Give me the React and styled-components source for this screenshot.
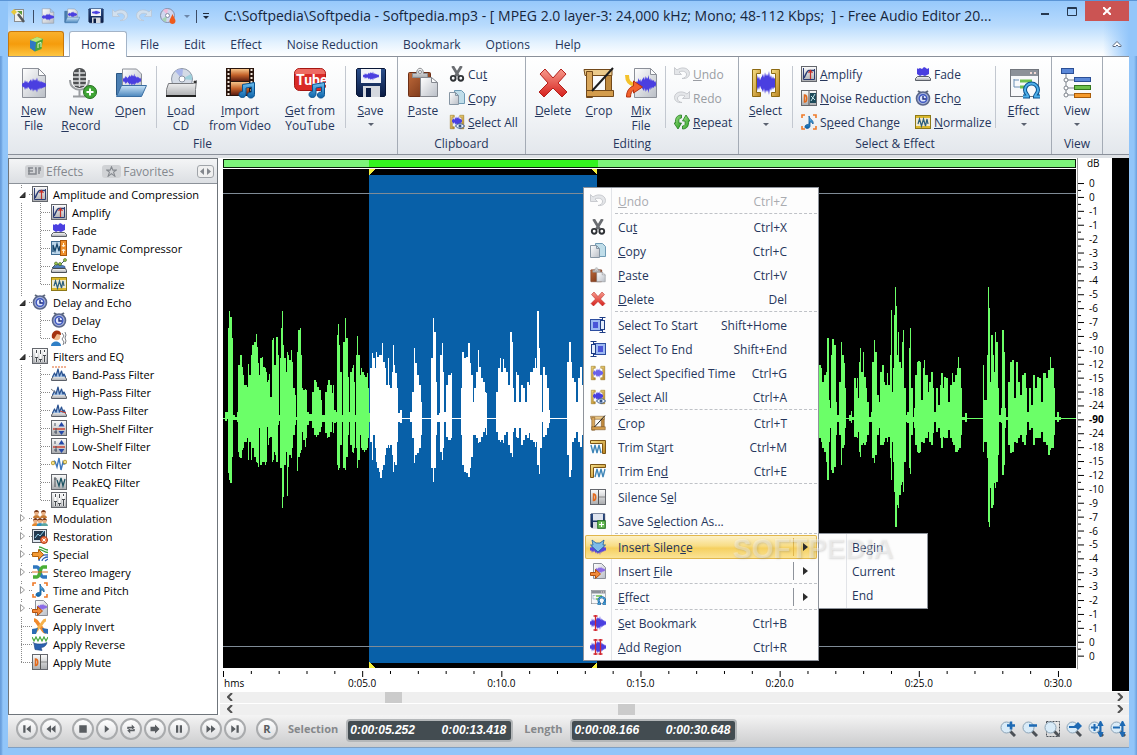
import React, { useState } from 'react';
import styled, { createGlobalStyle, css } from 'styled-components';

const GlobalStyle = createGlobalStyle`
  * {
    box-sizing: border-box;
  }

  body {
    margin: 0;
    font-family: 'Open Sans', 'Noto Sans', sans-serif;
    font-size: 12px;
    color: #26365c;
  }

  button {
    font: inherit;
    color: inherit;
    background: none;
    border: 0;
    padding: 0;
    margin: 0;
  }

  ul {
    list-style: none;
    margin: 0;
    padding: 0;
  }

  svg {
    display: block;
    flex: none;
  }
`;

/* ---------- icons ---------- */

const HEIGHTS = [1, 3, 2, 6, 3, 5, 2, 4, 5, 7, 4, 8, 5, 7, 5, 9, 4, 6, 3, 5, 3, 4, 2, 3, 1];

const Wave = ({ x, y, w, h, color = '#4a3fe0' }) => {
    const sx = w / 24;
    const sy = h / 18;
    const top = HEIGHTS.map((v, i) => `${x + i * sx},${y - v * sy}`);
    const bottom = HEIGHTS.map((v, i) => `${x + i * sx},${y + v * sy}`).reverse();
    return <polygon points={[...top, ...bottom].join(' ')} fill={color} />;
};

const Defs = () => (
    <svg width="0" height="0" aria-hidden="true">
        <defs>
            <linearGradient id="paper" x1="0" y1="0" x2="1" y2="1">
                <stop offset="0" stopColor="#fff" />
                <stop offset="1" stopColor="#b9bec6" />
            </linearGradient>
            <linearGradient id="steel" x1="0" y1="0" x2="0" y2="1">
                <stop offset="0" stopColor="#fdfdfd" />
                <stop offset="1" stopColor="#a9abae" />
            </linearGradient>
            <linearGradient id="folder" x1="0" y1="0" x2="0" y2="1">
                <stop offset="0" stopColor="#cde6f8" />
                <stop offset="1" stopColor="#4b86bd" />
            </linearGradient>
            <linearGradient id="red" x1="0" y1="0" x2="0" y2="1">
                <stop offset="0" stopColor="#f79a8c" />
                <stop offset="1" stopColor="#d6201c" />
            </linearGradient>
            <linearGradient id="gold" x1="0" y1="0" x2="1" y2="1">
                <stop offset="0" stopColor="#f7e08a" />
                <stop offset="1" stopColor="#b9821c" />
            </linearGradient>
            <linearGradient id="navy" x1="0" y1="0" x2="0" y2="1">
                <stop offset="0" stopColor="#2b4f8c" />
                <stop offset="1" stopColor="#0a1c44" />
            </linearGradient>
            <linearGradient id="wood" x1="0" y1="0" x2="1" y2="1">
                <stop offset="0" stopColor="#c06a3a" />
                <stop offset="1" stopColor="#6e2f14" />
            </linearGradient>
            <linearGradient id="film" x1="0" y1="0" x2="0" y2="1">
                <stop offset="0" stopColor="#f6c48a" />
                <stop offset="0.5" stopColor="#c4622a" />
                <stop offset="1" stopColor="#5c1c10" />
            </linearGradient>
            <linearGradient id="sky" x1="0" y1="0" x2="0" y2="1">
                <stop offset="0" stopColor="#6cc0f2" />
                <stop offset="1" stopColor="#0b61a8" />
            </linearGradient>
            <linearGradient id="leaf" x1="0" y1="0" x2="1" y2="1">
                <stop offset="0" stopColor="#a5e58c" />
                <stop offset="1" stopColor="#219a1c" />
            </linearGradient>
        </defs>
    </svg>
);

const Doc = () => <path d="M4.500 1.500h16l7 7v22h-23z M20.500 1.500v7h7" fill="url(#paper)" stroke="#8b8f98" />;

const Note = () => (
    <path
        d="M18.500 17.500l12-2v12c0 2-1.500 3.500-3.500 3.500s-3.500-1-3.500-3 1.500-3 4-3v-5l-5.500 1v6c0 2-1.500 3.500-3.500 3.500s-3.500-1-3.500-3 1.500-3 3.500-3z"
        fill="url(#sky)"
        stroke="#0a528f"
    />
);

const Plate = () => <rect x="0.500" y="0.500" width="15" height="15" fill="url(#steel)" stroke="#64676d" />;

const Brackets = () => (
    <g fill="url(#gold)" stroke="#8d6a12">
        <path d="M2.500 2.500h8v4h-4v19h4v4h-8z" />
        <path d="M29.500 2.500h-8v4h4v19h-4v4h8z" />
    </g>
);

const Lens = () => (
    <g>
        <path d="M10 10l5 5" stroke="#4c5157" strokeWidth="3" />
        <circle cx="6.500" cy="6.500" r="5.500" fill="#d9ebf8" stroke="#8ba3b6" />
    </g>
);

const Person = ({ x, y, shirt }) => (
    <g transform={`translate(${x} ${y})`}>
        <path d="M0 8c0-4 7-4 7 0z" fill={shirt} />
        <circle cx="3.500" cy="3" r="2.300" fill="#e9b083" />
        <path d="M1 3c0-4 5-4 5 0l-1-1H2z" fill="#7c3a17" />
    </g>
);

const FilterBase = () => (
    <path d="M3 9.500h10l2.500 3.500v1.500H.500V13z" fill="url(#steel)" stroke="#5a5f68" />
);

const FilterWave = () => (
    <path
        d="M1.500 11l2-4 1.500 3 2-7 1.500 7 2-5 1.500 5 1-2 1.500 3"
        fill="#9fbfe4"
        stroke="#2a5290"
        strokeWidth="1.200"
        strokeLinejoin="round"
    />
);

const art = {
    doc: [32, <><Doc /><Wave x={4} y={18} w={24} h={15} /></>],
    mic: [32, <>
        <path d="M5 13c0 13 19 13 19 0M14.500 23v6M8 29.500h13" fill="none" stroke="#9a9da1" strokeWidth="2" />
        <rect x="8" y="1" width="13" height="20" rx="6" fill="#4d4f52" />
        <path d="M9 6h11M8 10h13M8 14h13M9 18h11M14.500 2v18" stroke="#d8dadc" strokeWidth="1.500" />
        <circle cx="25" cy="25" r="6.500" fill="#3fa535" stroke="#256f1f" />
        <path d="M25 21.500v7M21.500 25h7" stroke="#fff" strokeWidth="2" />
    </>],
    open: [32, <>
        <path d="M1.500 28V6.500h6l2-2h5v23z" fill="#4b7fb3" stroke="#2a5684" />
        <path d="M7.500 25v-23h14l5 5v18z" fill="url(#paper)" stroke="#8b8f98" />
        <Wave x={8} y={13} w={18} h={13} />
        <path d="M6.500 18.500h25l-5 11h-25z" fill="url(#folder)" stroke="#3a6ea2" />
    </>],
    loadCd: [32, <>
        <circle cx="17" cy="12" r="10.500" fill="#d4dbe6" stroke="#8e97a6" />
        <path d="M17 12L10 4a11 11 0 0 1 8-2z" fill="#a9b6ea" />
        <path d="M17 12l9-5a11 11 0 0 1 1 6z" fill="#9ed0dc" />
        <circle cx="17" cy="12" r="3" fill="#fff" stroke="#8e97a6" />
        <path d="M3.500 16.500h25l3-3-1 9v7h-29v-7z" fill="url(#steel)" stroke="#77797d" />
        <path d="M1 28h30v2H1z" fill="#222" />
        <circle cx="30" cy="15" r="1.500" fill="#333" />
    </>],
    video: [32, <>
        <rect x="2" y="1" width="28" height="28" fill="#2a150d" />
        <rect x="7" y="2" width="18" height="12" fill="url(#film)" />
        <rect x="7" y="15" width="18" height="13" fill="url(#film)" />
        <path d="M4.500 2v27M27.500 2v27" stroke="#f2e6da" strokeWidth="2" strokeDasharray="2 2" />
        <Note />
    </>],
    tube: [32, <>
        <rect x="0.500" y="1.500" width="31" height="22" rx="5" fill="#d92a26" stroke="#a51612" />
        <path d="M1 7c0-5 3-5 5-5h20c3 0 5 1 5 5z" fill="#ee6b62" />
        <text x="2" y="18" fontFamily="Roboto, sans-serif" fontWeight="700" fontSize="14" fill="#fff">Tube</text>
        <Note />
    </>],
    save: [32, <>
        <path d="M2.500 1.500h27l1 1v26l-1 1H3.500l-2-2v-25z" fill="url(#navy)" stroke="#081636" />
        <rect x="6" y="2" width="20" height="14" fill="#f1f3f8" />
        <Wave x={8} y={9} w={16} h={9} />
        <rect x="8" y="19" width="17" height="11" fill="#d4d8df" />
        <rect x="11" y="21" width="5" height="9" fill="#0a1c44" />
    </>],
    saveSel: [32, <>
        <path d="M2.500 1.500h27v28H3.500l-2-2v-25z" fill="url(#navy)" stroke="#081636" />
        <rect x="6" y="2" width="20" height="13" fill="#dfe4ee" />
        <rect x="6" y="18" width="10" height="12" fill="#d4d8df" />
        <rect x="15.500" y="15.500" width="15" height="15" fill="#6fc25c" stroke="#1d6b18" strokeWidth="2" />
        <path d="M23 18v10M18 23h10" stroke="#fff" strokeWidth="2" />
    </>],
    paste: [32, <>
        <rect x="1.500" y="5.500" width="22" height="24" rx="1" fill="url(#wood)" stroke="#6d2f16" />
        <path d="M5.500 10.500v-4h4c0-7 7-7 7 0h4v4z" fill="url(#steel)" stroke="#8c8e92" />
        <circle cx="13" cy="5" r="1.500" fill="#fff" stroke="#8c8e92" />
        <path d="M13.500 10.500h11l6 5v14h-17z M24.500 10.500v5h6" fill="url(#paper)" stroke="#84888f" />
    </>],
    delete: [32, <path d="M3 7l5-5 8 9 8-9 5 5-8 9 9 9-5 5-9-9-9 9-5-5 9-9z" fill="url(#red)" stroke="#b3201b" />],
    crop: [32, <>
        <path d="M1 2.500h28v6H2z" fill="#ecca8a" stroke="#72491a" />
        <path d="M3.500 8.500v-4h6v26h-6z" fill="#d9a75c" stroke="#72491a" />
        <path d="M22.500 8.500h6v15h-6z" fill="#c08a3e" stroke="#72491a" />
        <path d="M3.500 23.500h27v6h-27z" fill="#d39c4c" stroke="#72491a" />
        <path d="M30 1L9 24" stroke="#1d1d1d" strokeWidth="2" />
    </>],
    mix: [32, <>
        <path d="M9.500 1.500h16l6 6v23h-22z M25.500 1.500v6h6" fill="url(#paper)" stroke="#8b8f98" />
        <Wave x={11} y={17} w={20} h={18} />
        <path d="M2 8c0 7 3 9 8 10" fill="none" stroke="#f4c22c" strokeWidth="4" />
        <path d="M1.500 30c0-6 3-10 7-11v-5l9 6-9 6v-3c-2 1-3 4-3 7z" fill="#f2622c" stroke="#b73110" />
    </>],
    select: [32, <><Wave x={4} y={16} w={24} h={24} /><Brackets /></>],
    selectAll: [32, <>
        <Brackets />
        <Wave x={6} y={14} w={20} h={20} />
        <path d="M13 24c4-6 14-6 18 0-4 6-14 6-18 0z" fill="#e7f0fb" stroke="#34558c" strokeWidth="2" />
        <circle cx="22" cy="24" r="3" fill="#34558c" />
    </>],
    selTime: [32, <><Brackets /><Wave x={6} y={16} w={20} h={20} color="#6a62ea" /></>],
    effect: [32, <>
        <rect x="2.500" y="2.500" width="28" height="27" fill="#f7f8fa" stroke="#72767d" />
        <rect x="3" y="3" width="27" height="6" fill="#8c9199" />
        <path d="M22 6h2M26 6h2" stroke="#f3d9d4" strokeWidth="2" />
        <path d="M6 12v8h6M6 13h5" fill="none" stroke="#6b8fb5" />
        <path d="M12 14h12M12 20h5" stroke="#6ec04f" strokeWidth="3" />
        <path d="M15 29.500h5c0-2-3-3-3-6.500a6.500 6.500 0 0 1 13 0c0 3.500-3 4.500-3 6.500h5" fill="none" stroke="#0a528f" strokeWidth="4" />
        <path d="M15 29.500h5c0-2-3-3-3-6.500a6.500 6.500 0 0 1 13 0c0 3.500-3 4.500-3 6.500h5" fill="none" stroke="#4fb0ea" strokeWidth="2" />
    </>],
    view: [32, <>
        <path d="M5 6v22M5 13h9M5 21h9M5 28h9" fill="none" stroke="#7d838c" />
        <rect x="0.500" y="1.500" width="12" height="5" fill="#5b88d8" stroke="#2b4f96" />
        <rect x="13.500" y="10.500" width="16" height="4" fill="#5b88d8" stroke="#2b4f96" />
        <rect x="13.500" y="18.500" width="16" height="4" fill="#6cc04a" stroke="#34761d" />
        <rect x="13.500" y="26.500" width="16" height="4" fill="#f59a2c" stroke="#a85c0a" />
        <g fill="#fff" stroke="#7d838c">
            <circle cx="5" cy="13" r="2" />
            <circle cx="5" cy="21" r="2" />
            <circle cx="5" cy="28" r="2" />
        </g>
    </>],
    wizard: [16, <>
        <rect x="3.500" y="1.500" width="9" height="12" fill="#f1f1ee" stroke="#8b8d8e" />
        <path d="M7 6l6 8" stroke="#55595c" strokeWidth="2.500" />
        <path d="M0 4l3-3 3 3-3 3z" fill="#e7c93d" />
        <path d="M6 3h5v4z" fill="#5f9a3c" />
    </>],
    cube: [32, <>
        <path d="M4 8l14-6 12 4-3 20-13 5-10-7z" fill="#4aa53a" />
        <path d="M4 8l12 4-2 19-10-7z" fill="#2f78c4" />
        <path d="M4 8l14-6 12 4-14 6z" fill="#bfe77a" />
        <path d="M20 15l6-2v9M20 15v9" fill="none" stroke="#e6f9c8" strokeWidth="2" />
    </>],
    cd: [16, <>
        <circle cx="7.500" cy="7.500" r="7" fill="#cfd6ee" stroke="#858da6" />
        <path d="M7 7L3 2a7 7 0 0 1 5-1z" fill="#f1b9d8" />
        <path d="M7 8l-5 3a7 7 0 0 0 4 3z" fill="#a5d4b4" />
        <circle cx="7.500" cy="7.500" r="2" fill="#fff" stroke="#858da6" />
        <path d="M12.500 6c1 3 3 5 3 7 0 4-6 4-6 0 0-2 2-4 3-7z" fill="#ee5a1c" />
    </>],
    undo: [16, <path d="M.500 1.500v7h7L5 6c4-2 8 0 7.500 3-.500 2-2 3-4.500 3.500 5 .500 7.500-2 7.500-5C15.500 2 8 0 3 4z" fill="#e4e6e9" stroke="#bfc2c7" strokeWidth="0.800" />],
    redo: [16, <path d="M15.500 1.500v7h-7L11 6C7 4 3 6 3.500 9c.500 2 2 3 4.500 3.500C3 13 .500 10.500.500 7.500.500 2 8 0 13 4z" fill="#e4e6e9" stroke="#bfc2c7" strokeWidth="0.800" />],
    repeat: [16, <g fill="url(#leaf)" stroke="#1f7a1a" strokeWidth="0.800">
        <path d="M7.500 1C3 1 1 4 1.500 9H0l4 6 3.500-6H5C4.500 6 5 4 7.500 4z" />
        <path d="M8.500 15c4.500 0 6.500-3 6-8H16l-4-6-3.500 6H11c.500 3 0 5-2.500 5z" />
    </g>],
    cut: [16, <>
        <path d="M3.500 0l6 10M12.500 0l-6 10" stroke="#6b6e72" strokeWidth="2.800" />
        <circle cx="4.200" cy="12.300" r="2.400" fill="none" stroke="#2f3236" strokeWidth="1.900" />
        <circle cx="11.800" cy="12.300" r="2.400" fill="none" stroke="#2f3236" strokeWidth="1.900" />
    </>],
    copy: [16, <>
        <path d="M5.500.500h7l3 3v10h-10z" fill="#bfdde9" stroke="#6f9bb5" />
        <path d="M.500 2.500h6l3 3v9h-9z M6.500 2.500v3h3" fill="url(#paper)" stroke="#8695a3" />
    </>],
    amplify: [16, <>
        <Plate />
        <path d="M2.500 2v11.500h11V3" fill="none" stroke="#2c3c74" />
        <path d="M3 12C5 8 6 4.500 8 4.500h5" fill="none" stroke="#2a3d74" strokeWidth="1.400" />
        <path d="M9.500 13V5M7.500 7l2-2.500 2 2.500" fill="none" stroke="#c6322a" strokeWidth="1.200" />
    </>],
    noise: [16, <>
        <Plate />
        <path d="M8 1v14" stroke="#555" />
        <path d="M3.500 5v7c3 0 3-7 0-7z" fill="none" stroke="#e2691c" strokeWidth="1.500" />
        <path d="M9 3h6v10H9z" fill="#1d4a5a" />
        <path d="M10 11l4-7M10 6l4 4" stroke="#bfe3ea" />
    </>],
    mute: [16, <>
        <Plate />
        <path d="M8.500 1v14" stroke="#555" />
        <path d="M9 8h6" stroke="#888" />
        <path d="M3.500 5v6.500c3 0 3-6.500 0-6.500z" fill="none" stroke="#e2691c" strokeWidth="1.500" />
    </>],
    speed: [16, <>
        <path d="M1 4V1h3M12 1h3v3M15 12v3h-3M4 15H1v-3" fill="none" stroke="#ef7a28" strokeWidth="1.600" />
        <path d="M8 2c1 4 5 4 4 8-1-2-2-2-3-2v4c0 3-5 3-5 1 0-3 3-2 4-3z" fill="url(#sky)" stroke="#0b5797" strokeWidth="0.800" />
    </>],
    fade: [16, <>
        <path d="M2 2l1 1 2-1 2 1 2-2 2 1 1 1 2-1v6l-2 1-2 1-3-1-2 1-3-2z" fill="#4a3fe0" />
        <path d="M2.500 10.500h11l2 2v2h-15v-2z" fill="url(#steel)" stroke="#5a5f68" />
    </>],
    echo: [16, <>
        <path d="M3 1l3 2M13 1l-3 2" stroke="#5b6678" strokeWidth="2" />
        <circle cx="8" cy="8.500" r="6.500" fill="#a5b2d8" stroke="#59658a" strokeWidth="1.600" />
        <circle cx="8" cy="8.500" r="3.800" fill="#dfe6fc" stroke="#3c55c0" strokeWidth="1.400" />
        <path d="M8 6v3h3" fill="none" stroke="#1c2c7c" strokeWidth="1.400" />
    </>],
    normalize: [16, <>
        <rect x="0.500" y="1.500" width="15" height="13" fill="#efe9cf" stroke="#8d7818" />
        <path d="M1 3h14M1 13h14" stroke="#dcb92c" strokeWidth="2" />
        <path d="M3 10l1.500-5 2 7 2-7 2 7 1.500-7 1 5" fill="none" stroke="#2c5f7c" strokeWidth="1.200" />
    </>],
    compressor: [16, <>
        <rect x="0.500" y="1.500" width="10" height="13" fill="#bcd6ea" stroke="#3f6c92" />
        <path d="M2 12V5l2 6 2-7 2 7 1-5" fill="none" stroke="#15456b" strokeWidth="1.300" />
        <rect x="9.500" y="0.500" width="6" height="15" fill="#ef8f2b" stroke="#a8550c" />
        <path d="M12.500 3v3M11 5l1.500 2L14 5M12.500 13v-3M11 11l1.500-2L14 11" fill="none" stroke="#fff3dc" />
    </>],
    envelope: [16, <>
        <path d="M1 10l4-4 4 1 5-5" fill="none" stroke="#3d5a66" />
        <path d="M2 9.500c3-3 8-3 12-1v1.500H2z" fill="#5584c0" stroke="#2f4f80" strokeWidth="0.600" />
        <path d="M1.500 10.500h13l1 2v2h-15v-2z" fill="url(#steel)" stroke="#4b4f57" />
        <g fill="#9cc84c" stroke="#3b5b18" strokeWidth="0.600">
            <circle cx="5" cy="5.500" r="1.500" />
            <circle cx="9" cy="6" r="1.500" />
            <circle cx="14" cy="2" r="1.500" />
        </g>
    </>],
    talker: [16, <>
        <path d="M0 16c0-6 10-6 10 0z" fill="#2f7fc6" />
        <circle cx="5.500" cy="6.500" r="3.800" fill="#f0b98c" />
        <path d="M1 8C-1-1 11-2 10 5L6 4l-3 5z" fill="#a5320f" />
        <path d="M11 3l2 3-2 3 2 3-1 3M14 2l1 3-1 3 1 3-1 3" fill="none" stroke="#7c8087" />
    </>],
    eq: [16, <>
        <Plate />
        <path d="M4.500 2v12M8.500 2v12M12.500 2v12" stroke="#fff" strokeWidth="2" />
        <path d="M3 9.500h3M7 11.500h3M11 7.500h3M4.500 9v5M8.500 11v3M12.500 7v7M4.500 2v3M8.500 2v4M12.500 2v2" stroke="#474b50" />
    </>],
    bandPass: [16, <>
        <path d="M1 1h14" stroke="#e0662a" strokeDasharray="2 1" />
        <FilterBase />
        <FilterWave />
    </>],
    highPass: [16, <>
        <FilterBase />
        <FilterWave />
        <path d="M0 5l5 4" stroke="#7a7d82" />
    </>],
    lowPass: [16, <>
        <FilterBase />
        <FilterWave />
        <path d="M9 9l6 2" stroke="#d0402c" />
    </>],
    shelf: [16, <>
        <Plate />
        <path d="M2 9h12" stroke="#cc3c2a" strokeWidth="1.400" />
        <path d="M4 3v3M3 12h3M5 8v6" stroke="#4b5565" />
        <path d="M7.500 6.500h6L10.500 2zM7.500 11h6l-3 4z" fill="#2549a8" />
    </>],
    notch: [16, <>
        <path d="M2 8c1-4 2-4 3 0l1 3 2-9 2 12 2-8 1 2 2-1" fill="none" stroke="#3d77bd" strokeWidth="1.400" />
        <circle cx="2" cy="7" r="1.800" fill="#f6e28a" stroke="#a98c1e" strokeWidth="0.800" />
        <circle cx="14" cy="6" r="1.800" fill="#f6e28a" stroke="#a98c1e" strokeWidth="0.800" />
    </>],
    peak: [16, <>
        <Plate />
        <path d="M4 3v10M3 5h3" stroke="#4b5157" />
        <path d="M6 6l2 6 2-8 2 8 2-7" fill="none" stroke="#1e5464" strokeWidth="1.300" />
    </>],
    people: [16, <>
        <Person x={1} y={0} shirt="#c67a34" />
        <Person x={8} y={0} shirt="#c67a34" />
        <Person x={0} y={8} shirt="#e4862c" />
        <Person x={4.5} y={8} shirt="#2f8ec0" />
        <Person x={9} y={8} shirt="#5ba6a0" />
    </>],
    restore: [16, <>
        <rect x="0.500" y="1.500" width="14" height="13" fill="#dfe6ee" stroke="#545a63" />
        <rect x="2" y="3" width="11" height="9" fill="#23394f" />
        <path d="M3 10l3-4 2 2 4-5" fill="none" stroke="#8fd0ee" />
        <circle cx="12" cy="12" r="3.500" fill="#f17a4a" stroke="#b33a16" />
        <path d="M10.500 10.500l3 3M13.500 10.500l-3 3" stroke="#fff" />
    </>],
    special: [16, <>
        <g fill="none" strokeWidth="1.300">
            <path d="M7 1c4 0 5 3 9 3M7 3.500c4 0 5 3 9 3" stroke="#3aa23a" />
            <path d="M7 15c0-4 4-7 9-6M10 15c0-2 3-4 6-4M13 15l3-2" stroke="#2b5fb4" />
        </g>
        <path d="M.500 6.500h6v-3l5 5-5 5v-3h-6z" fill="#f39a34" stroke="#b3610c" />
    </>],
    stereo: [16, <>
        <path d="M1 3h4c3 0 3 10 6 10h4" fill="none" stroke="#2f77c0" strokeWidth="3.500" />
        <path d="M15 3h-4c-3 0-3 10-6 10H1" fill="none" stroke="#4aae36" strokeWidth="3.500" />
        <path d="M0 8h16" stroke="#d86c24" />
    </>],
    generate: [16, <>
        <path d="M3.500.500h8l4 4v11h-12z" fill="url(#paper)" stroke="#8b8f98" />
        <Wave x={5} y={7} w={10} h={7} color="#8a6ae6" />
        <path d="M.500 9.500h5v-3l5 4.500-5 4.500v-3h-5z" fill="#f28a3a" stroke="#b3510c" />
    </>],
    invert: [16, <>
        <path d="M2 2c3 0 3 3 6 6s3 6 6 6" fill="none" stroke="#f08a2c" strokeWidth="3.500" />
        <path d="M14 2c-3 0-3 3-6 6s-3 6-6 6" fill="none" stroke="#f6b24c" strokeWidth="3" />
        <path d="M0 11l6-1-2 6H0zM10 10l6 1v5l-4-1z" fill="#2b6cb4" />
    </>],
    reverse: [16, <>
        <path d="M0 1l2 4 2-4 2 4 2-4 2 4 2-4 2 4 2-4" fill="none" stroke="#46a83a" strokeWidth="1.200" />
        <path d="M1 6.500c3 2 10 2 14 0-1 4-4 5-6 5l1 3-7-1-1-6z" fill="#2b62b0" stroke="#17407c" strokeWidth="0.600" />
    </>],
    selStart: [16, <>
        <rect x="0.500" y="2.500" width="11" height="11" fill="#9db8f2" stroke="#2c4da0" />
        <rect x="3" y="5" width="5" height="6" fill="#4a55d8" />
        <path d="M9.500.500h6M9.500 15.500h6M12.500 1v14" stroke="#1d3c84" />
        <rect x="10.500" y="3.500" width="4" height="9" fill="#e4edfb" stroke="#1d3c84" />
    </>],
    selEnd: [16, <>
        <rect x="4.500" y="2.500" width="11" height="11" fill="#9db8f2" stroke="#2c4da0" />
        <rect x="8" y="5" width="5" height="6" fill="#4a55d8" />
        <path d="M.500.500h6M.500 15.500h6M3.500 1v14" stroke="#1d3c84" />
        <rect x="1.500" y="3.500" width="4" height="9" fill="#e4edfb" stroke="#1d3c84" />
    </>],
    trimStart: [16, <>
        <path d="M.500 1.500h15v13h-3v-10h-12z" fill="url(#gold)" stroke="#7d5616" />
        <path d="M1 6l2 8 2-8 2 8 2-8 2 8" fill="none" stroke="#3f86b8" strokeWidth="1.400" />
    </>],
    trimEnd: [16, <>
        <path d="M.500 1.500h15v3h-12v10h-3z" fill="url(#gold)" stroke="#7d5616" />
        <path d="M5 14l2-8 2 8 2-8 2 8 2-8" fill="none" stroke="#3f86b8" strokeWidth="1.400" />
    </>],
    insSilence: [16, <>
        <Wave x={0} y={10} w={16} h={12} color="#5a46dc" />
        <path d="M2 1l4 3h4l4-3-1 5h2.500L8 13 .500 6H3z" fill="#7dbbe8" stroke="#1f5f9c" strokeWidth="0.800" />
    </>],
    bookmark: [16, <>
        <Wave x={0} y={8} w={16} h={14} />
        <path d="M5.500 0v16M3.500 1h4M3.500 15h4" stroke="#d1262e" strokeWidth="1.300" />
    </>],
    region: [16, <>
        <Wave x={0} y={8} w={16} h={14} />
        <path d="M5.500 0v16M10.500 0v16M3.500 1h4M8.500 1h4M3.500 15h4M8.500 15h4" stroke="#d1262e" strokeWidth="1.300" />
    </>],
    zoomIn: [16, <><Lens /><path d="M11 .500v8M7 4.500h8" stroke="#1e6ab4" strokeWidth="2.500" /></>],
    zoomOut: [16, <><Lens /><path d="M7 4.500h8" stroke="#1e6ab4" strokeWidth="2.500" /></>],
    zoomSel: [16, <><rect x="2.500" y="0.500" width="13" height="15" fill="none" stroke="#4a5058" strokeDasharray="2 1" /><Lens /></>],
    zoomFull: [16, <><Lens /><path d="M3 6h8" stroke="#1e6ab4" strokeWidth="2" /><path d="M12 1l4 4-4 4-4-4z" fill="#1e6ab4" /></>],
    zoomVIn: [16, <><Lens /><path d="M6.500 3v7M3 6.500h7" stroke="#1e6ab4" strokeWidth="2" /><path d="M12.500 3v10M11 4l1.500-3L14 4zM11 12l1.500 3 1.500-3z" fill="#4ba3e6" stroke="#1e6ab4" strokeWidth="2" /></>],
    zoomVOut: [16, <><Lens /><path d="M3 6.500h7" stroke="#1e6ab4" strokeWidth="2" /><path d="M12.500 3v10M11 4l1.500-3L14 4zM11 12l1.500 3 1.500-3z" fill="#4ba3e6" stroke="#1e6ab4" strokeWidth="2" /></>],
    first: [16, <path d="M3 3h3v10H3zM13 3v10L7 8z" />],
    rewind: [16, <path d="M8 3v10L2 8zM14 3v10L8 8z" />],
    stop: [16, <path d="M3 3h10v10H3z" />],
    play: [16, <path d="M5 3l6 5-6 5z" />],
    loop: [16, <path d="M3 8V5h6V2l4 4-4 3V7H5v1zM13 8v3H7v3l-4-4 4-3v2h4V8z" />],
    next: [16, <path d="M2 5h6V2l6 6-6 6v-3H2z" />],
    pause: [16, <path d="M4 3h3v10H4zM9 3h3v10H9z" />],
    forward: [16, <path d="M2 3l6 5-6 5zM8 3l6 5-6 5z" />],
    last: [16, <path d="M3 3l6 5-6 5zM10 3h3v10h-3z" />],
};

const Icon = ({ name, size = 16 }) => {
    const [box, shapes] = art[name];
    return (
        <svg width={size} height={size} viewBox={`0 0 ${box} ${box}`} fill="currentColor" aria-hidden="true">
            {shapes}
        </svg>
    );
};

/* "&File" draws an underlined F */
const Hotkey = ({ text }) => {
    const at = text.indexOf('&');
    if (at < 0) return <span>{text}</span>;
    return (
        <span>
            {text.slice(0, at)}
            <u>{text[at + 1]}</u>
            {text.slice(at + 2)}
        </span>
    );
};

/* ---------- window frame ---------- */

const Window = styled.div`
  position: relative;
  display: flex;
  flex-direction: column;
  min-height: 100vh;
  padding: 0 8px 8px;
  background:
    linear-gradient(to right, #6a9fdc 1px, transparent 3px, transparent calc(100% - 3px), #6a9fdc 100%),
    #91c5f9;
`;

const Header = styled.header`
  margin: 0 -8px;
  padding: 0 8px;
  border-top: 1px solid #5b95d6;
  background:
    linear-gradient(to right, #91c5f9 8px, transparent 8px),
    linear-gradient(to left, #93c6fa 8px, rgba(147, 198, 250, 0) 34px),
    linear-gradient(to bottom, #97c9fb 0, #b7dafd 24px, #e4f2fe 42px, #ffffff 55px);
`;

const TitleBar = styled.div`
  display: flex;
  align-items: center;
  height: 30px;
`;

const QuickAccess = styled.div`
  display: flex;
  align-items: center;
  gap: 8px;
  padding: 0 15px 0 3px;
  color: #34445f;

  button:disabled {
    opacity: 0.7;
  }
`;

const QuickDivider = styled.span`
  width: 1px;
  height: 13px;
  margin: 0 -2px;
  background-color: #3c4c66;
`;

const Caret = styled.span`
  display: block;
  border: 3px solid transparent;
  border-top-color: ${props => props.color || '#5b6270'};
  border-bottom-width: 0;
`;

const Customize = styled.button`
  && {
    padding-top: 2px;
    border-top: 1px solid #1f2a3c;
  }
`;

const Title = styled.h1`
  flex: 1;
  min-width: 0;
  margin: 0;
  overflow: hidden;
  white-space: pre;
  font-size: 14px;
  font-weight: 400;
  line-height: 30px;
  color: #16263c;
`;

const WindowButtons = styled.div`
  display: flex;
  align-self: flex-start;

  button {
    display: flex;
    align-items: center;
    justify-content: center;
    width: 27px;
    height: 20px;
    color: #26384f;
  }

  button:first-child {
    padding-top: 5px;
  }

  button:last-child {
    width: 44px;
    color: #fff;
    background-color: #cb5453;
  }
`;

const Tabs = styled.nav`
  display: flex;
  gap: 1px;
  height: 25px;
`;

const AppButton = styled.button`
  && {
    display: flex;
    align-items: center;
    justify-content: center;
    width: 56px;
    margin-right: 4px;
    border: 1px solid #c7780d;
    border-bottom: 0;
    border-radius: 3px 3px 0 0;
    background: linear-gradient(to bottom, #f9b12d, #f59c0c 50%, #fdc642);
  }
`;

const Tab = styled.button`
  && {
    padding: 0 11px;
    border: 1px solid transparent;
    border-bottom: 0;
    border-radius: 3px 3px 0 0;
    line-height: 26px;
    ${props => props.$active && css`
      position: relative;
      height: 26px;
      background-color: #fff;
      border-color: #a3b4c8;
    `}
  }
`;

const Collapse = styled.button`
  && {
    margin-left: auto;
    padding-right: 7px;
  }
`;

/* ---------- ribbon ---------- */

const Ribbon = styled.div`
  display: flex;
  border: solid #8a909a;
  border-width: 1px 0;
  background: linear-gradient(to bottom, #ffffff 0, #f5f7f9 50%, #e3e7ec 100%);
`;

const Group = styled.section`
  display: flex;
  flex-direction: column;
  padding-top: 5px;
  border-right: 1px solid #a4abb5;
`;

const GroupBody = styled.div`
  display: flex;
  height: 72px;
  padding: 0 ${props => props.$pad || 0}px;
`;

const GroupTitle = styled.h2`
  margin: 0;
  font-size: 12px;
  font-weight: 400;
  line-height: 20px;
  text-align: center;
`;

const BigButton = styled.button`
  && {
    display: flex;
    flex-direction: column;
    align-items: center;
    width: ${props => props.$w}px;
    padding-top: 5px;
    line-height: 15px;
    white-space: nowrap;
  }

  svg {
    margin-bottom: 4px;
  }

  ${Caret} {
    margin-top: 5px;
  }
`;

const Divider = styled.span`
  width: 1px;
  margin: 4px 0 6px ${props => props.$gap || 0}px;
  background-color: #c3c8d0;
`;

const SmallColumn = styled.div`
  display: flex;
  flex-direction: column;
  width: ${props => props.$w}px;
  padding-left: ${props => props.$pad || 0}px;
`;

const SmallButton = styled.button`
  && {
    display: flex;
    align-items: center;
    gap: 3px;
    height: 24px;
    white-space: nowrap;
  }

  &&:disabled {
    color: #9a9da3;
  }
`;

/* ---------- body ---------- */

const Body = styled.main`
  display: flex;
  flex: 1;
  padding-top: 3px;
  background-color: #dfe2e6;
`;

const Sidebar = styled.aside`
  display: flex;
  flex-direction: column;
  width: 210px;
  border: 1px solid #6f757b;
  background-color: #fff;
`;

const SideTabs = styled.div`
  display: flex;
  align-items: center;
  height: 25px;
  padding: 0 3px 0 16px;
  color: #84888e;
  border-bottom: 1px solid #8c9299;
  background: linear-gradient(to bottom, #f4f5f6, #dcdfe3);

  button {
    display: flex;
    align-items: center;
    gap: 2px;
    margin-right: 19px;
  }

  button:last-child {
    justify-content: center;
    gap: 4px;
    width: 17px;
    height: 13px;
    margin: 0 0 0 auto;
    border: 1px solid #a0a4a9;
    border-radius: 3px;
    background-color: #f0f0f0;
  }
`;

const SideBadge = styled.span`
  display: flex;
  align-items: center;
  justify-content: center;
  width: 19px;
  height: 13px;
  border-radius: 3px;
  background-color: #d0d2d5;
`;

const Tree = styled.ul`
  padding-top: 1px;
  font-size: 11px;
  color: #000;
`;

const Node = styled.li`
  display: flex;
  align-items: center;
  height: 18px;
`;

const DOTS_Y = 'repeating-linear-gradient(to bottom, #8a8a8a 0 1px, transparent 1px 2px)';
const DOTS_X = 'repeating-linear-gradient(to right, #8a8a8a 0 1px, transparent 1px 2px)';

const Trunk = styled.span`
  display: flex;
  align-items: center;
  width: 23px;
  height: 18px;
  padding-left: 9px;
  background-repeat: no-repeat;
  background-image: ${DOTS_Y}, ${DOTS_X};
  background-position: 12px 0, right 9px;
  background-size:
    1px ${props => (props.$kind === 'toggle' ? '3px' : props.$kind === 'end' ? '9px' : '18px')},
    ${props => (props.$kind === 'toggle' ? '3px' : props.$kind === 'line' ? '0' : '11px')} 1px;
`;

const Branch = styled.span`
  width: 19px;
  height: 18px;
  background-repeat: no-repeat;
  background-image: ${DOTS_Y}, ${DOTS_X};
  background-position: 8px 0, 9px 9px;
  background-size: 1px ${props => (props.$last ? '9px' : '18px')}, 10px 1px;
`;

const NodeLabel = styled.button`
  && {
    display: flex;
    align-items: center;
    gap: 5px;
    white-space: nowrap;
  }
`;

const Editor = styled.section`
  display: flex;
  flex: 1;
  flex-direction: column;
  min-width: 0;
  background-color: #fff;
`;

const EditorTop = styled.div`
  display: grid;
  flex: 1;
  grid-template-columns: minmax(0, 1fr) 36px 17px;
  padding-left: 5px;
`;

const Track = styled.div`
  display: flex;
  flex-direction: column;
  padding-top: 1px;
`;

const Overview = styled.div`
  height: 9px;
  margin-bottom: 1px;
  border: 1px solid #0a1f0a;
  background: linear-gradient(to right, #7df57a 17%, #33f51e 17%, #33f51e 44%, #7df57a 44%);
`;

const Canvas = styled.div`
  display: flex;
  flex: 1;
  background-color: #000;
`;

const BlackStrip = styled.div`
  background-color: #000;
`;

const ScrollRow = styled.div`
  display: flex;
  align-items: center;
  height: 11px;
  margin: 1px 0 0 2px;
  padding: 0 6px 0 7px;
  color: #505050;
  background-color: #efefef;
`;

const ScrollTrack = styled.div`
  flex: 1;
  height: 11px;
  padding-left: ${props => props.$at};
`;

const Thumb = styled.div`
  width: 17px;
  height: 11px;
  background-color: #cbcbcb;
`;

/* ---------- footer ---------- */

const Footer = styled.footer`
  display: flex;
  align-items: center;
  height: 33px;
  padding: 0 3px 4px 8px;
  border-bottom: 1px solid #7f9fc2;
  background: linear-gradient(to bottom, #f4f4f4, #dfdfe0 50%, #cbcccd);
`;

const ButtonSet = styled.div`
  display: flex;
  gap: 2px;
  margin-right: 10px;
`;

const RoundButton = styled.button`
  && {
    display: flex;
    align-items: center;
    justify-content: center;
    width: 22px;
    height: 22px;
    border: 2px solid #a9abad;
    border-radius: 50%;
    font-size: 11px;
    font-weight: 700;
    color: #595d61;
    background: linear-gradient(to bottom, #ffffff, #dcdddf);
  }
`;

const FooterLabel = styled.span`
  font-size: 11px;
  font-weight: 700;
  color: #85888b;
`;

const Readout = styled.output`
  display: flex;
  align-items: center;
  justify-content: space-between;
  width: 167px;
  height: 23px;
  margin: 3px 11px 0 8px;
  padding: 0 5px 0 2px;
  border: 2px solid #b4b7b9;
  border-radius: 4px;
  font: italic 700 12px 'Liberation Sans', sans-serif;
  color: #fff;
  background-color: #434c51;
`;

const ZoomSet = styled.div`
  display: flex;
  gap: 6px;
  margin-left: auto;
`;

/* ---------- menus ---------- */

const Menu = styled.ul`
  position: absolute;
  top: ${props => props.$top}px;
  left: ${props => props.$left}px;
  width: ${props => props.$w}px;
  padding: 1px;
  border: 1px solid #8e939b;
  background:
    linear-gradient(to right, transparent 27px, #e2e4e8 27px, #e2e4e8 28px, transparent 28px),
    #fdfdfd;
`;

const MenuItem = styled.button`
  && {
    display: grid;
    grid-template-columns: 28px 1fr auto 30px;
    align-items: center;
    width: 100%;
    height: 24px;
    padding-left: 5px;
    border-radius: 2px;
    text-align: left;
    white-space: nowrap;
    ${props => props.$hot && css`
      background: linear-gradient(to bottom, #fdf3ce, #f8dd86 45%, #f5d060 55%, #fbe59b);
      box-shadow: inset 0 0 0 1px #e0b64c;
    `}
  }

  &&:disabled {
    color: #a9abb0;
  }
`;

const MenuArrow = styled.span`
  display: flex;
  align-items: center;
  height: 18px;
  margin-left: 6px;
  padding-left: 9px;
  border-left: 1px solid ${props => (props.$hot ? '#e0b64c' : '#8e939b')};

  &::after {
    content: '';
    border: 4px solid transparent;
    border-left: 5px solid #2c2c2c;
    border-right: 0;
  }
`;

const MenuLine = styled.li`
  height: 2px;
  margin-left: 30px;
  border-top: 1px dashed #bfc2c7;
`;

const SubItem = styled.button`
  && {
    display: block;
    width: 100%;
    height: 24px;
    padding-left: 32px;
    text-align: left;
  }
`;

const Watermark = styled.div`
  position: absolute;
  top: 533px;
  left: 733px;
  font: 700 28px/32px 'Liberation Sans', sans-serif;
  color: rgba(255, 255, 255, 0.35);
  text-shadow: 1px 1px 2px rgba(120, 120, 120, 0.25);
  pointer-events: none;
`;

/* ---------- data ---------- */

const tabs = ['Home', 'File', 'Edit', 'Effect', 'Noise Reduction', 'Bookmark', 'Options', 'Help'];

const treeData = [
    ['Amplitude and Compression', 'amplify', [
        ['Amplify', 'amplify'],
        ['Fade', 'fade'],
        ['Dynamic Compressor', 'compressor'],
        ['Envelope', 'envelope'],
        ['Normalize', 'normalize'],
    ]],
    ['Delay and Echo', 'echo', [
        ['Delay', 'echo'],
        ['Echo', 'talker'],
    ]],
    ['Filters and EQ', 'eq', [
        ['Band-Pass Filter', 'bandPass'],
        ['High-Pass Filter', 'highPass'],
        ['Low-Pass Filter', 'lowPass'],
        ['High-Shelf Filter', 'shelf'],
        ['Low-Shelf Filter', 'shelf'],
        ['Notch Filter', 'notch'],
        ['PeakEQ Filter', 'peak'],
        ['Equalizer', 'eq'],
    ]],
    ['Modulation', 'people', []],
    ['Restoration', 'restore', []],
    ['Special', 'special', []],
    ['Stereo Imagery', 'stereo', []],
    ['Time and Pitch', 'speed', []],
    ['Generate', 'generate', []],
    ['Apply Invert', 'invert'],
    ['Apply Reverse', 'reverse'],
    ['Apply Mute', 'mute'],
];

const menuData = [
    [['undo', '&Undo', 'Ctrl+Z']],
    [['cut', 'Cu&t', 'Ctrl+X'], ['copy', '&Copy', 'Ctrl+C'], ['paste', '&Paste', 'Ctrl+V'], ['delete', '&Delete', 'Del']],
    [
        ['selStart', 'Select To Start', 'Shift+Home'],
        ['selEnd', 'Select To End', 'Shift+End'],
        ['selTime', 'Select Specified Time', 'Ctrl+G'],
        ['selectAll', '&Select All', 'Ctrl+A'],
    ],
    [['crop', '&Crop', 'Ctrl+T'], ['trimStart', 'Trim St&art', 'Ctrl+M'], ['trimEnd', 'Trim En&d', 'Ctrl+E']],
    [['mute', 'Silence S&el', ''], ['saveSel', 'Save S&election As...', '']],
    [['insSilence', 'Insert Silen&ce', '>'], ['generate', 'Insert &File', '>']],
    [['effect', '&Effect', '>']],
    [['bookmark', '&Set Bookmark', 'Ctrl+B'], ['region', '&Add Region', 'Ctrl+R']],
];

const levels = [0, 0, -1, -1, -2, -3, -3, -4, -5, -6, -7, -9, -10, -12, -15, -18, -24];
const dbMarks = [...levels, -90, ...[...levels].reverse()];

/* x, top, bottom of each column; three units to a pixel, zero line at 790 */
const takes = [
    [-9, `15,772,798 20,772,792 24,518,955 28,470,975 31,485,983 35,550,905 38,625,870 40,780,795 46,787,795 50,770,800
    54,630,890 58,630,905 61,600,910 65,635,885 70,660,880 73,690,860 82,695,850 85,628,915 88,660,860 94,600,915
    97,570,880 103,560,905 107,537,920 110,575,925 113,625,935 117,660,820 119,610,930 125,605,920 130,635,920
    135,640,930 138,650,920 142,680,815 145,675,870 148,657,850 151,725,845 155,705,810 157,555,920 160,548,915
    163,630,890 166,630,900 169,545,920 173,600,810 176,780,798 180,610,940 184,520,940 187,470,1058 190,570,1025
    193,610,930 197,640,930 199,650,890 201,590,1022 205,600,935 208,615,900 212,620,905 214,585,910 217,620,880
    220,700,840 224,720,810 227,785,795 232,590,947 235,525,905 239,520,895 243,600,885 247,700,830 250,705,855
    254,702,875 258,705,850 261,770,810 266,778,797 275,780,800 277,710,820 282,675,840 287,680,845 292,695,840
    297,705,830 302,735,815 307,780,800 315,710,835 320,690,850 325,675,845 330,690,830 335,715,800 339,690,835
    343,765,805 348,770,800 351,540,930 354,508,945 358,570,940 361,650,870 365,780,800 369,560,940 375,490,945
    379,550,905 383,665,840 387,770,800 391,650,870 395,640,890 398,630,895 402,680,880 406,780,800 409,600,880
    412,543,940 415,600,915 419,660,840 423,640,880 427,650,885 431,660,890 435,665,885 439,655,880 443,700,850
    446,775,800 450,640,860 454,595,915 458,610,840 463,640,880 466,590,920 470,605,940 475,600,950 480,600,968
    485,565,945 488,620,930 493,640,900 498,690,880 502,610,870 505,690,880 510,700,870 514,650,900 517,570,950
    521,630,920 525,655,930 529,700,860 532,775,800 540,765,805 544,788,792 570,770,800 575,710,850 580,580,925
    584,625,900 590,660,895 597,690,880 601,740,840 605,788,792 631,610,940 637,490,980 642,530,940 646,680,840
    650,780,800 656,775,800 660,600,890 664,565,915 668,650,880 672,770,800 678,690,845 684,660,855 692,655,850
    696,788,792 722,700,840 726,590,930 731,610,950 737,605,955 743,565,965 748,625,940 752,660,905 757,740,840
    762,700,840 767,650,850 772,585,865 777,635,860 783,670,845 789,680,830 793,710,820 797,715,840 800,788,792
    827,710,830 834,640,855 838,610,860 842,650,855 847,612,865 852,640,840 858,650,830 864,690,870 868,530,895
    874,560,905 878,700,830 882,740,820 886,650,845 891,660,850 896,740,820 902,690,870 908,700,855 913,740,840
    919,680,850 925,690,835 930,650,855 937,640,860 943,610,875 948,640,860 951,468,930 955,580,958 960,660,880
    964,770,800 969,635,845 975,660,840 980,700,820 985,765,805 990,788,792 1041,620,900 1047,560,965 1051,620,945
    1056,670,860 1062,680,850 1067,740,830 1072,670,860 1078,635,875 1084,690,840 1090,685,840 1096,790,790`],
    [1761, `22,630,850 30,640,860 35,680,880 40,660,890 45,650,920 49,548,975 54,735,860 58,760,820 61,600,945 65,552,955
    71,570,935 75,740,840 80,780,800 85,680,840 90,560,930 95,600,880 100,625,870 104,700,820 107,788,792
    114,780,797 120,768,805 125,785,795 130,668,845 135,700,845 138,670,850 142,730,830 145,620,890 148,580,905
    152,650,870 156,590,865 159,665,870 166,700,860 169,740,840 175,785,800 181,770,800 185,620,910 189,556,925
    194,590,900 199,720,840 204,740,820 209,650,870 214,630,870 219,680,860 224,690,850 228,655,860 232,690,845
    237,600,910 240,465,975 243,710,860 247,640,920 250,480,1010 253,396,1115 256,455,1115 258,600,1050 262,530,1060
    266,620,1020 270,640,990 274,560,980 277,525,1010 281,700,920 285,780,800 290,770,805 294,580,940 297,520,958
    301,700,840 306,785,800 310,760,820 314,660,870 318,620,890 323,618,895 328,620,890 331,735,860 336,640,865
    340,615,865 344,660,850 351,710,830 356,680,860 361,650,870 366,700,835 370,770,800 376,700,830 381,750,820
    386,690,850 390,655,878 395,700,845 400,665,850 405,670,850 411,740,825 417,690,850 422,655,860 427,680,870
    432,660,890 437,640,890 441,607,885 444,640,880 450,700,840 453,785,795 462,775,800 467,788,792 517,630,890
    520,735,860 527,600,910 530,480,1080 532,396,1100 535,460,1115 538,680,1000 541,540,1060 545,600,1050
    549,650,985 553,530,1000 556,560,980 561,700,900 564,780,800 571,760,805 574,525,960 578,590,930 581,760,820
    586,785,795 590,680,870 597,620,895 604,615,890 609,730,860 615,620,865 621,680,850 626,720,840 632,660,860
    638,655,870 644,700,840 648,770,800 654,700,825 660,750,820 666,660,870 671,700,850 677,665,850 684,670,850
    690,740,830 697,655,860 704,670,870 710,645,900 717,605,885 720,640,880 728,700,840 731,785,795 738,772,802
    744,785,795 750,789,791 795,790,790`],
];

const wavePaths = () => {
    const paths = { green: '', white: '' };
    takes.forEach(([start, text]) => {
        const columns = text.trim().split(/\s+/).map(c => c.split(',').map(Number));
        columns.slice(0, -1).forEach(([x, top, bottom], i) => {
            const left = x + start;
            const key = left >= 438 && left < 1122 ? 'white' : 'green';
            paths[key] += `M${left} ${top - 43}H${columns[i + 1][0] + start}V${bottom - 43}H${left}Z`;
        });
    });
    return paths;
};

const Waveform = () => {
    const { green, white } = wavePaths();
    return (
        <svg width="100%" height="100%" viewBox="0 0 2556 1494" preserveAspectRatio="none" shapeRendering="crispEdges">
            <rect x="438" y="18" width="684" height="1461" fill="#0860a8" />
            <path d="M0 72h2556v3H0zM0 1428h2556v3H0z" fill="#7f8b96" />
            <path d="M438 0h18l-18 18zM1122 0h-18l18 18zM438 1494h18l-18-18zM1122 1494h-18l18-18z" fill="#f4f03c" />
            <path d="M0 746h2556v3H0z" fill="#7df57a" />
            <path d="M438 746h684v3H438z" fill="#fff" />
            <path d={green} fill="#6bff68" />
            <path d={white} fill="#fff" />
        </svg>
    );
};

const LENGTH = 30.648;

const TimeAxis = () => (
    <svg width="100%" height="23" overflow="visible" fontSize="10" fill="#000">
        {Array.from({ length: 31 }, (_, s) => (
            <rect key={s} x={`${(s / LENGTH) * 100}%`} y="3" width="1" height={s % 5 ? 3 : 6} />
        ))}
        <text x="1" y="19">hms</text>
        {[5, 10, 15, 20, 25, 30].map(s => (
            <text key={s} x={`${(s / LENGTH) * 100}%`} y="19" textAnchor="middle">
                {`0:${String(s).padStart(2, '0')}.0`}
            </text>
        ))}
    </svg>
);

const DbAxis = () => (
    <svg width="36" height="100%" overflow="visible" fontSize="10" fill="#000">
        <rect x="1" y="0" width="1" height="96%" fill="#9a9a9a" />
        <text x="11" y="9">dB</text>
        {dbMarks.map((mark, i) => {
            const y = 4.7 + i * 2.61;
            return (
                <g key={i}>
                    <rect x="2" y={`${y}%`} width="6" height="1" />
                    {i < dbMarks.length - 1 && <rect x="2" y={`${y + 1.3}%`} width="3" height="1" />}
                    <text x="13" y={`${y}%`} dy="4" fontWeight={mark === -90 ? 700 : 400}>{mark}</text>
                </g>
            );
        })}
    </svg>
);

/* ---------- parts ---------- */

const Big = ({ icon, text, w, caret }) => (
    <BigButton $w={w}>
        <Icon name={icon} size={32} />
        {text.split('\n').map(line => <Hotkey key={line} text={line} />)}
        {caret && <Caret />}
    </BigButton>
);

const Small = ({ icon, text, disabled }) => (
    <SmallButton disabled={disabled}>
        <Icon name={icon} />
        <Hotkey text={text} />
    </SmallButton>
);

const Chevron = ({ flip }) => (
    <svg width="6" height="8" viewBox="0 0 6 8" fill="none" stroke="currentColor" strokeWidth="2">
        <path d={flip ? 'M1 0l4 4-4 4' : 'M5 0L1 4l4 4'} />
    </svg>
);

const EffectTree = () => {
    const [open, setOpen] = useState(['Amplitude and Compression', 'Delay and Echo', 'Filters and EQ']);

    const toggle = name => {
        setOpen(open.includes(name) ? open.filter(n => n !== name) : [...open, name]);
    };

    return (
        <Tree>
            {treeData.map(([name, icon, children], i) => (
                <React.Fragment key={name}>
                    <Node>
                        <Trunk $kind={children ? 'toggle' : i === treeData.length - 1 ? 'end' : 'leaf'}>
                            {children && (
                                <button aria-label={`Toggle ${name}`} onClick={() => toggle(name)}>
                                    <svg width="8" height="10" viewBox="0 0 8 10">
                                        {open.includes(name)
                                            ? <path d="M7 3.500v5H2z" fill="#3c3c3c" stroke="#222" />
                                            : <path d="M2.500 1.500v7l4-3.500z" fill="#fff" stroke="#9b9b9b" />}
                                    </svg>
                                </button>
                            )}
                        </Trunk>
                        <NodeLabel>
                            <Icon name={icon} />
                            {name}
                        </NodeLabel>
                    </Node>
                    {children && open.includes(name) && children.map(([child, childIcon], j) => (
                        <Node key={child}>
                            <Trunk $kind="line" />
                            <Branch $last={j === children.length - 1} />
                            <NodeLabel>
                                <Icon name={childIcon} />
                                {child}
                            </NodeLabel>
                        </Node>
                    ))}
                </React.Fragment>
            ))}
        </Tree>
    );
};

const ContextMenu = () => (
    <>
        <Menu $top={187} $left={583} $w={236}>
            {menuData.map((section, s) => (
                <React.Fragment key={s}>
                    {s > 0 && <MenuLine />}
                    {section.map(([icon, text, keys]) => (
                        <li key={text}>
                            <MenuItem disabled={icon === 'undo'} $hot={icon === 'insSilence'}>
                                <Icon name={icon} />
                                <Hotkey text={text} />
                                <span>{keys === '>' ? '' : keys}</span>
                                {keys === '>' && <MenuArrow $hot={icon === 'insSilence'} />}
                            </MenuItem>
                        </li>
                    ))}
                </React.Fragment>
            ))}
        </Menu>
        <Menu $top={533} $left={818} $w={110}>
            {['Begin', 'Current', 'End'].map(item => (
                <li key={item}><SubItem>{item}</SubItem></li>
            ))}
        </Menu>
        <Watermark>SOFTPEDIA</Watermark>
    </>
);

const App = () => (
    <Window>
        <GlobalStyle />
        <Header>
            <TitleBar>
                <QuickAccess>
                    <button aria-label="Wizard"><Icon name="wizard" /></button>
                    <QuickDivider />
                    <button aria-label="New"><Icon name="doc" /></button>
                    <button aria-label="Open"><Icon name="open" /></button>
                    <button aria-label="Save"><Icon name="save" /></button>
                    <button aria-label="Undo" disabled><Icon name="undo" /></button>
                    <button aria-label="Redo" disabled><Icon name="redo" /></button>
                    <button aria-label="Burn"><Icon name="cd" /></button>
                    <Caret color="#6d86a8" />
                    <QuickDivider />
                    <Customize aria-label="Customize"><Caret color="#1f2a3c" /></Customize>
                </QuickAccess>
                <Title>{'C:\\Softpedia\\Softpedia - Softpedia.mp3 - [ MPEG 2.0 layer-3: 24,000 kHz; Mono; 48-112 Kbps;  ] - Free Audio Editor 20...'}</Title>
                <WindowButtons>
                    <button aria-label="Minimize">
                        <svg width="8" height="2"><rect width="8" height="2" fill="currentColor" /></svg>
                    </button>
                    <button aria-label="Maximize">
                        <svg width="10" height="9" fill="none" stroke="currentColor"><path d="M.500.500h9v8h-9zM0 1.500h10" /></svg>
                    </button>
                    <button aria-label="Close">
                        <svg width="8" height="8" stroke="currentColor" strokeWidth="2"><path d="M0 0l8 8M8 0L0 8" /></svg>
                    </button>
                </WindowButtons>
            </TitleBar>
            <Tabs>
                <AppButton aria-label="Application menu"><Icon name="cube" /></AppButton>
                {tabs.map(tab => <Tab key={tab} $active={tab === 'Home'}>{tab}</Tab>)}
                <Collapse aria-label="Collapse ribbon">
                    <svg width="10" height="8" fill="#fff" stroke="#5c6b82"><path d="M1 5.500l4-4 4 4v1H6.500L5 5 3.500 6.500H1z" /></svg>
                </Collapse>
            </Tabs>
        </Header>

        <Ribbon>
            <Group>
                <GroupBody $pad={2}>
                    <Big icon="doc" text={'&New\nFile'} w={47} />
                    <Big icon="mic" text={'New\n&Record'} w={48} />
                    <Big icon="open" text="&Open" w={51} />
                    <Divider />
                    <Big icon="loadCd" text={'&Load\nCD'} w={48} />
                    <Big icon="video" text={'&Import\nfrom Video'} w={70} />
                    <Big icon="tube" text={'&Get from\nYouTube'} w={70} />
                    <Divider />
                    <Big icon="save" text="&Save" w={49} caret />
                </GroupBody>
                <GroupTitle>File</GroupTitle>
            </Group>
            <Group>
                <GroupBody>
                    <Big icon="paste" text="&Paste" w={50} />
                    <SmallColumn $w={77} $pad={1}>
                        <Small icon="cut" text="Cu&t" />
                        <Small icon="copy" text="&Copy" />
                        <Small icon="selectAll" text="&Select All" />
                    </SmallColumn>
                </GroupBody>
                <GroupTitle>Clipboard</GroupTitle>
            </Group>
            <Group>
                <GroupBody $pad={3}>
                    <Big icon="delete" text="&Delete" w={48} />
                    <Big icon="crop" text="&Crop" w={44} />
                    <Big icon="mix" text={'&Mix\nFile'} w={40} />
                    <Divider $gap={4} />
                    <SmallColumn $w={69} $pad={8}>
                        <Small icon="undo" text="&Undo" disabled />
                        <Small icon="redo" text="Redo" disabled />
                        <Small icon="repeat" text="&Repeat" />
                    </SmallColumn>
                </GroupBody>
                <GroupTitle>Editing</GroupTitle>
            </Group>
            <Group>
                <GroupBody>
                    <Big icon="select" text="&Select" w={53} caret />
                    <Divider />
                    <SmallColumn $w={122} $pad={8}>
                        <Small icon="amplify" text="&Amplify" />
                        <Small icon="noise" text="&Noise Reduction" />
                        <Small icon="speed" text="S&peed Change" />
                    </SmallColumn>
                    <SmallColumn $w={80}>
                        <Small icon="fade" text="Fade" />
                        <Small icon="echo" text="Ech&o" />
                        <Small icon="normalize" text="&Normalize" />
                    </SmallColumn>
                    <Divider />
                    <Big icon="effect" text="&Effect" w={55} caret />
                </GroupBody>
                <GroupTitle>Select &amp; Effect</GroupTitle>
            </Group>
            <Group>
                <GroupBody>
                    <Big icon="view" text="View" w={50} caret />
                </GroupBody>
                <GroupTitle>View</GroupTitle>
            </Group>
        </Ribbon>

        <Body>
            <Sidebar>
                <SideTabs>
                    <button>
                        <SideBadge>
                            <svg width="13" height="8" fill="none" stroke="currentColor" strokeWidth="1.500">
                                <path d="M0 1h5M0 4h5M0 7h5M1 1v6M7 1h1v6H5M11 7V1h2v3" />
                            </svg>
                        </SideBadge>
                        Effects
                    </button>
                    <button>
                        <SideBadge>
                            <svg width="11" height="11" viewBox="0 0 16 16" fill="none" stroke="currentColor" strokeWidth="1.500">
                                <path d="M8 1l2 5h5l-4 3 2 6-5-4-5 4 2-6-4-3h5z" />
                            </svg>
                        </SideBadge>
                        Favorites
                    </button>
                    <button aria-label="Scroll tabs">
                        <svg width="11" height="7" fill="currentColor"><path d="M4 0v7L0 3.500zM7 0v7l4-3.500z" /></svg>
                    </button>
                </SideTabs>
                <EffectTree />
            </Sidebar>
            <Editor>
                <EditorTop>
                    <Track>
                        <Overview />
                        <Canvas><Waveform /></Canvas>
                        <TimeAxis />
                    </Track>
                    <DbAxis />
                    <BlackStrip />
                </EditorTop>
                {['17%', '43%'].map(at => (
                    <ScrollRow key={at}>
                        <button aria-label="Scroll left"><Chevron /></button>
                        <ScrollTrack $at={at}><Thumb /></ScrollTrack>
                        <button aria-label="Scroll right"><Chevron flip /></button>
                    </ScrollRow>
                ))}
            </Editor>
        </Body>

        <Footer>
            {[['first', 'rewind'], ['stop', 'play', 'loop', 'next', 'pause'], ['forward', 'last']].map(set => (
                <ButtonSet key={set[0]}>
                    {set.map(name => (
                        <RoundButton key={name} aria-label={name}><Icon name={name} size={12} /></RoundButton>
                    ))}
                </ButtonSet>
            ))}
            <ButtonSet><RoundButton>R</RoundButton></ButtonSet>
            <FooterLabel>Selection</FooterLabel>
            <Readout><span>0:00:05.252</span><span>0:00:13.418</span></Readout>
            <FooterLabel>Length</FooterLabel>
            <Readout><span>0:00:08.166</span><span>0:00:30.648</span></Readout>
            <ZoomSet>
                {['zoomIn', 'zoomOut', 'zoomSel', 'zoomFull', 'zoomVIn', 'zoomVOut'].map(name => (
                    <button key={name} aria-label={name}><Icon name={name} /></button>
                ))}
            </ZoomSet>
        </Footer>

        <ContextMenu />
        <Defs />
    </Window>
);

export default App;
